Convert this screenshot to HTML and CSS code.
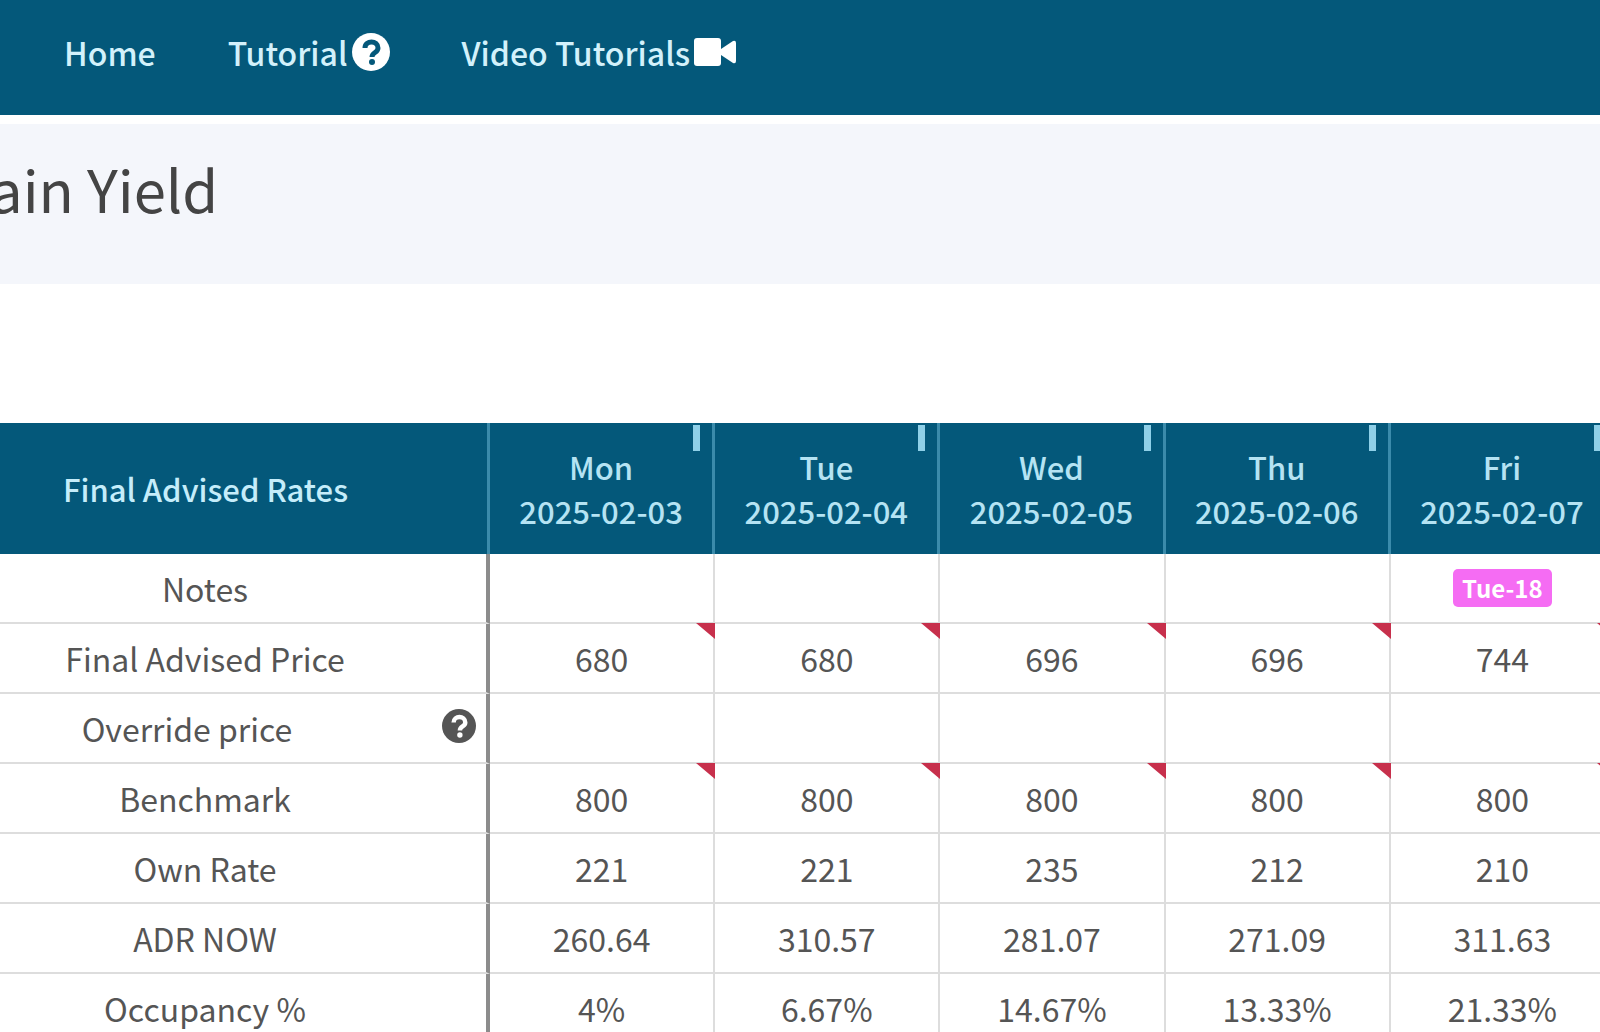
FILE: index.html
```
<!DOCTYPE html>
<html lang="en">
<head>
  <meta charset="UTF-8">
  <title>Yield</title>
  <link rel="stylesheet" href="styles.css">
</head>
<body>
  <nav class="navbar">
    <a href="#">Home</a>
    <a href="#">Tutorial
      <svg class="icon-help" viewBox="0 0 38 38">
        <circle cx="19" cy="19" r="19" fill="#fff"/>
        <path d="M13 15c0-8 13-8 13 0 0 5-6 4-6 9" fill="none" stroke="#04587a" stroke-width="5"/>
        <circle cx="20" cy="29" r="3" fill="#04587a"/>
      </svg>
    </a>
    <a href="#">Video Tutorials
      <svg class="icon-video" viewBox="0 0 42 28">
        <rect width="27" height="28" rx="3" fill="#fff"/>
        <path d="M27 11l12-8q3-1 3 2v18q0 3-3 2l-12-8z" fill="#fff"/>
      </svg>
    </a>
  </nav>

  <header class="page-title">
    <h1>ain Yield</h1>
  </header>

  <main>
    <table class="rates">
      <thead>
        <tr>
          <th class="label">Final Advised Rates</th>
          <th class="day">Mon<br>2025-02-03</th>
          <th class="day">Tue<br>2025-02-04</th>
          <th class="day">Wed<br>2025-02-05</th>
          <th class="day">Thu<br>2025-02-06</th>
          <th class="day">Fri<br>2025-02-07</th>
        </tr>
      </thead>
      <tbody>
        <tr><td class="label">Notes</td><td></td><td></td><td></td><td></td><td><span class="badge">Tue-18</span></td></tr>
        <tr class="flagged"><td class="label">Final Advised Price</td><td>680</td><td>680</td><td>696</td><td>696</td><td>744</td></tr>
        <tr>
          <td class="label with-help">Override price
            <svg class="icon-help" viewBox="0 0 38 38">
              <circle cx="19" cy="19" r="19" fill="#555"/>
              <path d="M13 15c0-8 13-8 13 0 0 5-6 4-6 9" fill="none" stroke="#fff" stroke-width="5"/>
              <circle cx="20" cy="29" r="3" fill="#fff"/>
            </svg>
          </td>
          <td></td><td></td><td></td><td></td><td></td>
        </tr>
        <tr class="flagged"><td class="label">Benchmark</td><td>800</td><td>800</td><td>800</td><td>800</td><td>800</td></tr>
        <tr><td class="label">Own Rate</td><td>221</td><td>221</td><td>235</td><td>212</td><td>210</td></tr>
        <tr><td class="label">ADR NOW</td><td>260.64</td><td>310.57</td><td>281.07</td><td>271.09</td><td>311.63</td></tr>
        <tr><td class="label">Occupancy %</td><td>4%</td><td>6.67%</td><td>14.67%</td><td>13.33%</td><td>21.33%</td></tr>
      </tbody>
    </table>
  </main>
</body>
</html>
```
FILE: styles.css
```
* { box-sizing: border-box; }
body { margin: 0; background: #fff; color: #555; font-family: "Noto Sans CJK SC", "Open Sans", sans-serif; font-size: 32px; overflow: hidden; }

.navbar { display: flex; align-items: center; gap: 72px; padding: 30px 64px 41px; background: #04587a; }
.navbar a { display: flex; align-items: center; gap: 4px; color: #d3f1fb; font-weight: 500; line-height: 44px; text-decoration: none; }
.icon-help { width: 38px; height: 38px; }
.icon-video { width: 42px; height: 28px; }

.page-title { padding: 28px 0 60px; background: #f4f6fb; border-top: 9px solid #fff; }
.page-title h1 { margin: 0 0 0 -10px; color: #444; font-size: 58px; font-weight: 400; line-height: 72px; }

main { padding-top: 139px; }
.rates { width: 101%; table-layout: fixed; border-collapse: separate; border-spacing: 0; text-align: center; }
.rates th { height: 131px; padding: 0; background: #04587a; border-right: 3px solid #3b8bab; color: #b5e3f3; font-size: 31px; font-weight: 500; line-height: 44px; }
.rates td { position: relative; height: 70px; padding: 0; border-right: 2px solid #ddd; border-bottom: 2px solid #ddd; line-height: 44px; }
.rates .label { width: 490px; padding-right: 76px; }
.rates td.label { border-right: 4px solid #8c8c8c; }
.rates th.label { color: #c5edfa; }

.rates .day { position: relative; }
.day::after { content: ""; position: absolute; top: 2px; right: 12px; width: 7px; height: 26px; background: #8fd0e8; }

.flagged td:not(.label)::after { content: ""; position: absolute; top: -1px; right: -2px; border-top: 16px solid #c7304c; border-left: 19px solid transparent; }

.rates .with-help { padding-right: 112px; }
.with-help .icon-help { position: absolute; top: 15px; right: 10px; width: 34px; height: 34px; }

.badge { display: inline-block; width: 99px; height: 38px; margin-bottom: 6px; border-radius: 5px; background: #f56cf3; color: #fff; font-size: 24px; font-weight: 700; line-height: 38px; vertical-align: middle; }
```
